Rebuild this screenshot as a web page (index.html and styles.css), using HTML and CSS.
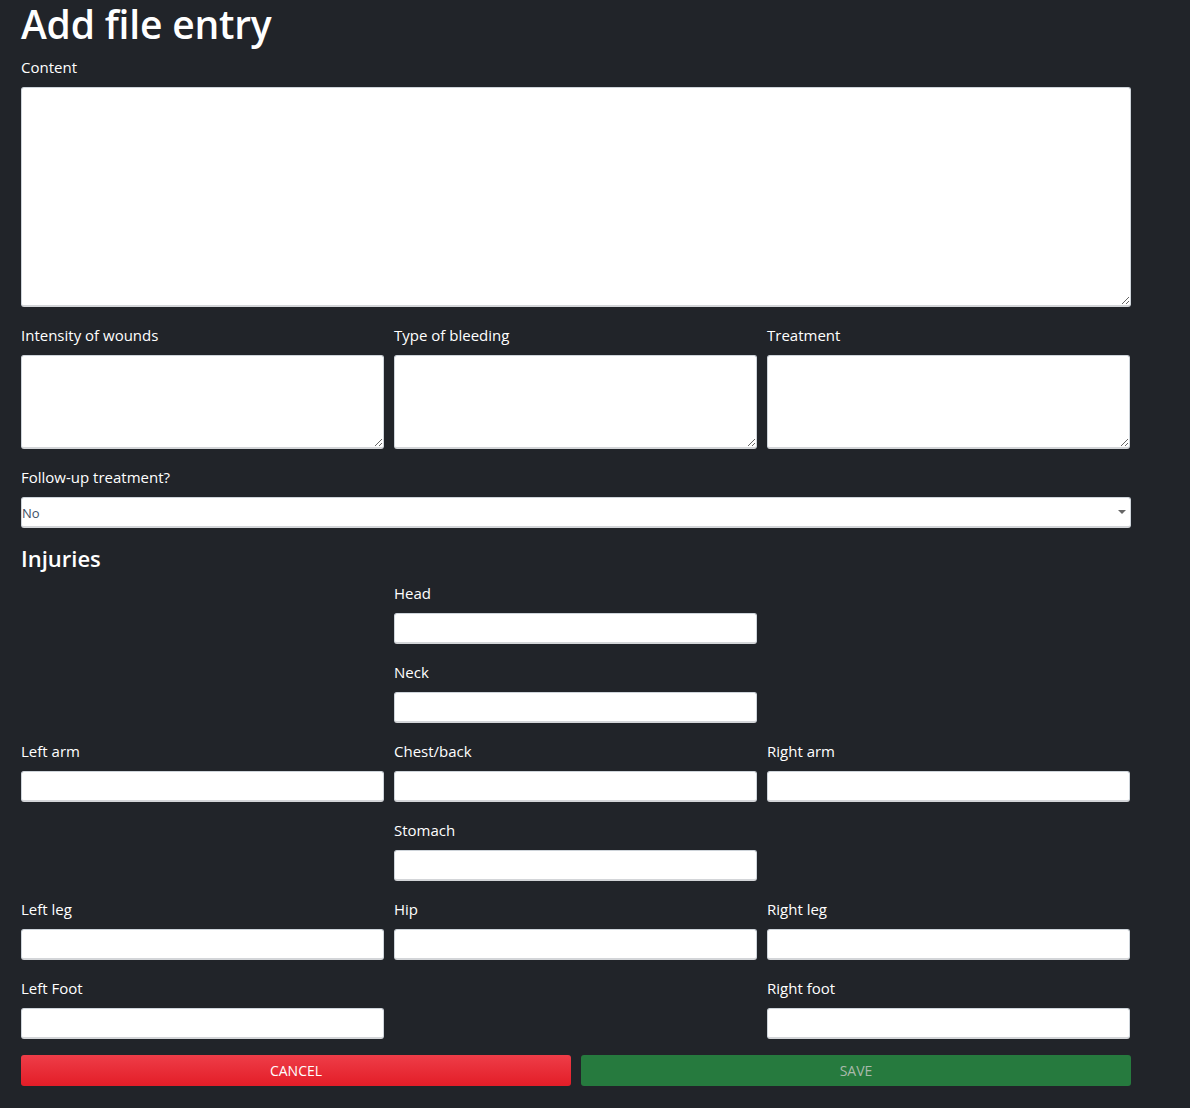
FILE: index.html
```html
<!DOCTYPE html>
<html lang="en">
<head>
<meta charset="utf-8">
<title>Add file entry</title>
<link rel="stylesheet" href="styles.css">
</head>
<body>
<main class="page">
  <h1 class="title">Add file entry</h1>
  <div class="group">
    <label class="label">Content</label>
    <textarea class="field area-lg"></textarea>
  </div>
  <div class="grid3">
    <div class="group">
      <label class="label">Intensity of wounds</label>
      <textarea class="field area-sm"></textarea>
    </div>
    <div class="group">
      <label class="label">Type of bleeding</label>
      <textarea class="field area-sm"></textarea>
    </div>
    <div class="group">
      <label class="label">Treatment</label>
      <textarea class="field area-sm"></textarea>
    </div>
  </div>
  <div class="group">
    <label class="label">Follow-up treatment?</label>
    <div class="select">
      <span class="select-value">No</span>
      <span class="caret"></span>
    </div>
  </div>
  <h4 class="subtitle">Injuries</h4>
  <div class="grid3">
    <div class="group col2"><label class="label">Head</label><input class="field input"></div>
    <div class="group col2"><label class="label">Neck</label><input class="field input"></div>
    <div class="group col1"><label class="label">Left arm</label><input class="field input"></div>
    <div class="group col2"><label class="label">Chest/back</label><input class="field input"></div>
    <div class="group col3"><label class="label">Right arm</label><input class="field input"></div>
    <div class="group col2"><label class="label">Stomach</label><input class="field input"></div>
    <div class="group col1"><label class="label">Left leg</label><input class="field input"></div>
    <div class="group col2"><label class="label">Hip</label><input class="field input"></div>
    <div class="group col3"><label class="label">Right leg</label><input class="field input"></div>
    <div class="group col1"><label class="label">Left Foot</label><input class="field input"></div>
    <div class="group col3"><label class="label">Right foot</label><input class="field input"></div>
  </div>
  <div class="actions">
    <button class="btn btn-cancel">CANCEL</button>
    <button class="btn btn-save">SAVE</button>
  </div>
</main>
</body>
</html>
```

FILE: styles.css
```css
html, body {
  margin: 0;
  padding: 0;
  background: #212429;
}
body {
  font-family: "Open Sans", "Noto Sans", "Liberation Sans", sans-serif;
  color: #ffffff;
  font-size: 15px;
}
.page {
  width: 1110px;
  padding-left: 21px;
  padding-bottom: 20px;
}
.title {
  margin: 0 0 7px 0;
  font-size: 39px;
  line-height: 48px;
  font-weight: 600;
  letter-spacing: -0.2px;
}
.group {
  display: flex;
  flex-direction: column;
  margin-bottom: 16px;
}
.label {
  font-size: 15px;
  line-height: 24px;
  margin-bottom: 8px;
}
.field {
  box-sizing: border-box;
  background: #ffffff;
  border: 1px solid #ced4da;
  border-bottom: 2px solid #d3d5d8;
  border-radius: 3px;
  font-family: inherit;
  margin: 0;
  outline: none;
  display: block;
}
.area-lg {
  width: 1110px;
  height: 220px;
}
.area-sm {
  width: 363px;
  height: 94px;
}
.input {
  width: 363px;
  height: 31px;
}
.grid3 {
  display: grid;
  grid-template-columns: 363px 363px 363px;
  column-gap: 10px;
}
.col1 { grid-column: 1; }
.col2 { grid-column: 2; }
.col3 { grid-column: 3; }
.select {
  box-sizing: border-box;
  width: 1110px;
  height: 31px;
  background: #ffffff;
  border: 1px solid #ced4da;
  border-bottom: 2px solid #d3d5d8;
  border-radius: 3px;
  display: flex;
  align-items: center;
  justify-content: space-between;
  padding: 0 4px 0 0;
}
.select-value {
  font-size: 13px;
  color: #3e4f66;
  padding-top: 1px;
}
.caret {
  width: 0;
  height: 0;
  border-left: 4px solid transparent;
  border-right: 4px solid transparent;
  border-top: 4px solid #666666;
}
.subtitle {
  margin: 0 0 8px 0;
  font-size: 22px;
  line-height: 29px;
  font-weight: 600;
}
.actions {
  display: grid;
  grid-template-columns: 550px 550px;
  column-gap: 10px;
  margin-top: 0;
}
.btn {
  height: 31px;
  border: none;
  border-radius: 3px;
  font-family: inherit;
  font-size: 14px;
  padding: 0;
}
.btn-cancel {
  background: linear-gradient(#ee3d48, #e31d27);
  color: #ffffff;
}
.btn-save {
  background: #267a3e;
  color: #a9b9ab;
}
```
